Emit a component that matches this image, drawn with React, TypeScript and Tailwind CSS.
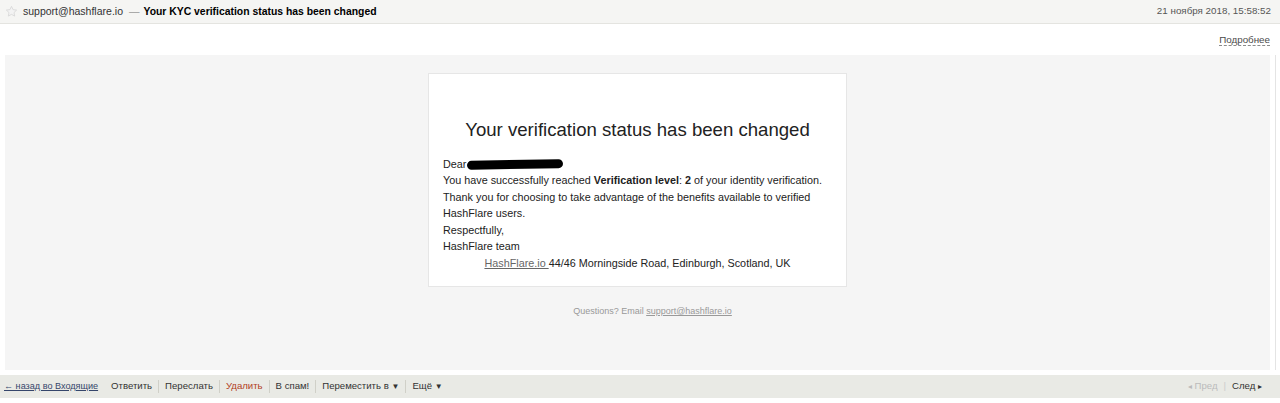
export default function App() {
  return (
    <div className="h-[403px] w-[1280px] overflow-hidden bg-white font-['Liberation_Sans',Arial,sans-serif] text-[#222]">
      {/* message header */}
      <div className="flex h-[24px] items-center border-b border-[#e4e4e0] bg-[#f5f5f3] pl-[5px] pr-[9px] text-[10.5px]">
        <svg width="13" height="13" viewBox="0 0 24 24" className="mr-[5px]">
          <path
            d="M12 2.5l2.9 6.1 6.6.8-4.9 4.6 1.3 6.5L12 17.3l-5.9 3.2 1.3-6.5-4.9-4.6 6.6-.8z"
            fill="#f3f3f3"
            stroke="#d6d6d6"
            strokeWidth="1.5"
          />
        </svg>
        <span className="text-[#333]">support@hashflare.io</span>
        <span className="ml-[6px] mr-[4px] text-[#999]">—</span>
        <span className="text-[10.4px] font-bold text-black">Your KYC verification status has been changed</span>
        <span className="ml-auto text-[9.8px] text-[#555]">21 ноября 2018, 15:58:52</span>
      </div>

      <div className="flex h-[31px] items-center justify-end pr-[10px]">
        <span className="border-b border-dashed border-[#8a8a8a] text-[9.8px] leading-[11px] text-[#4a4a4a]">
          Подробнее
        </span>
      </div>

      <div className="flex">
        {/* email body */}
        <div className="ml-[5px] flex h-[315px] w-[1265px] flex-col items-center bg-[#f5f5f5] pt-[18px]">
          <div className="w-[419px] border border-[#e6e6e6] bg-white px-[14px] pb-[15px] pt-[44px]">
            <h1 className="text-center text-[18.6px] leading-[24px] text-[#222]">
              Your verification status has been changed
            </h1>
            <div className="mt-[14px] text-[10.8px] leading-[16.5px] text-[#222]">
              <p className="flex h-[16px] items-center">
                Dear
                <span className="ml-[1px] inline-block h-[9px] w-[96px] -rotate-1 rounded-full bg-black" />
              </p>
              <p>
                You have successfully reached <b>Verification level</b>: <b>2</b> of your identity verification.
              </p>
              <p>Thank you for choosing to take advantage of the benefits available to verified HashFlare users.</p>
              <p>Respectfully,</p>
              <p>HashFlare team</p>
              <p className="text-center">
                <span className="text-[#666] underline">HashFlare.io </span>44/46 Morningside Road, Edinburgh, Scotland, UK
              </p>
            </div>
          </div>
          <div className="ml-[30px] mt-[18px] text-[9px] text-[#999]">
            Questions? Email <span className="underline">support@hashflare.io</span>
          </div>
        </div>
        <div className="ml-[5px] h-[315px] w-[1px] bg-[#e4e4e4]" />
      </div>

      {/* bottom toolbar */}
      <div className="mt-[5px] flex h-[23px] items-center bg-[#e9eae5] px-[4px] text-[9.6px] text-[#333]">
        <span className="text-[9.1px] text-[#35466b] underline">← назад во Входящие</span>
        <div className="ml-[13px] flex items-center">
          <span>Ответить</span>
          <span className="mx-[6px] h-[13px] w-px bg-[#d0d0c8]" />
          <span>Переслать</span>
          <span className="mx-[6px] h-[13px] w-px bg-[#d0d0c8]" />
          <span className="text-[#b2401d]">Удалить</span>
          <span className="mx-[6px] h-[13px] w-px bg-[#d0d0c8]" />
          <span>В спам!</span>
          <span className="mx-[6px] h-[13px] w-px bg-[#d0d0c8]" />
          <span>
            Переместить в <span className="text-[8px]">▼</span>
          </span>
          <span className="mx-[6px] h-[13px] w-px bg-[#d0d0c8]" />
          <span>
            Ещё <span className="text-[8px]">▼</span>
          </span>
        </div>
        <div className="ml-auto flex items-center pr-[14px]">
          <span className="text-[#bbb]">
            <span className="text-[8px]">◂</span> Пред
          </span>
          <span className="mx-[6px] text-[#ccc]">|</span>
          <span>
            След <span className="text-[8px]">▸</span>
          </span>
        </div>
      </div>
    </div>
  );
}
